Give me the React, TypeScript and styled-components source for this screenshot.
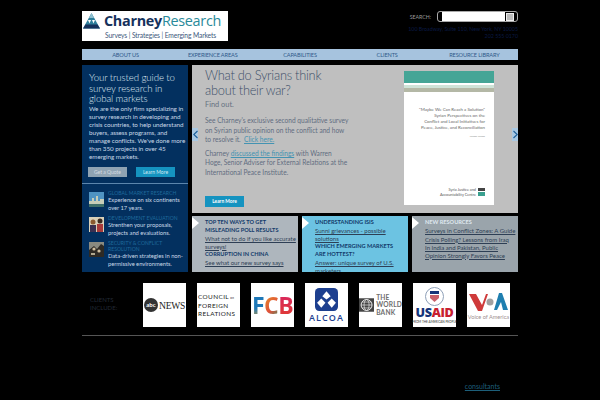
import React from "react";
import styled, { createGlobalStyle } from "styled-components";

const Global = createGlobalStyle`
  html, body { margin: 0; padding: 0; background: #000; height: 100%; overflow: hidden; }
  body { font-family: Lato, "Open Sans", "Liberation Sans", sans-serif; }
`;

const Page = styled.div`
  width: 436px;
  margin: 0 0 0 82px;
  padding-top: 11px;
  display: flex;
  flex-direction: column;
`;

const Header = styled.header`
  display: flex;
  justify-content: space-between;
  height: 38px;
`;

const Logo = styled.div`
  width: 146px;
  height: 30px;
  background: #fff;
  display: flex;
  flex-direction: column;
`;

const LogoTop = styled.div`
  display: flex;
  align-items: center;
  height: 20px;
  padding-left: 1px;
  gap: 4px;
`;

const LogoName = styled.span`
  font-size: 14.4px;
  font-weight: 700;
  letter-spacing: -0.3px;
  color: #16325c;
  line-height: 20px;
  font-family: "Open Sans", sans-serif;
  white-space: nowrap;
  & > b {
    font-weight: 400;
    color: #2a8a9a;
  }
`;

const LogoSub = styled.div`
  font-size: 6.7px;
  letter-spacing: -0.1px;
  line-height: 9px;
  color: #40587c;
  padding-left: 23px;
  white-space: nowrap;
`;

const HeaderRight = styled.div`
  display: flex;
  flex-direction: column;
  align-items: flex-end;
`;

const SearchRow = styled.div`
  display: flex;
  align-items: center;
  gap: 6px;
  height: 11px;
`;

const SearchLabel = styled.span`
  font-size: 5.2px;
  color: #9a9a9a;
`;

const SearchBox = styled.div`
  width: 81px;
  height: 11px;
  box-sizing: border-box;
  border: 1px solid #aaa;
  border-radius: 3px;
  padding: 0 3px 0 4px;
  display: flex;
  align-items: center;
  gap: 1px;
`;

const SearchInput = styled.div`
  width: 63px;
  height: 9px;
  background: #fff;
`;

const SearchBtn = styled.div`
  width: 8px;
  height: 8px;
  background: #bbb;
  border: 1px solid #eee;
  box-sizing: border-box;
`;

const Address = styled.div`
  margin-top: 4px;
  font-size: 5.3px;
  line-height: 7px;
  color: #0a1a45;
  text-align: right;
  white-space: nowrap;
`;

const Nav = styled.nav`
  display: grid;
  grid-template-columns: repeat(5, 1fr);
  height: 11px;
  background: #a6c3de;
`;

const NavItem = styled.a`
  font-size: 5.6px;
  letter-spacing: -0.12px;
  line-height: 11px;
  color: #2f5a8a;
  text-align: center;
`;

const Main = styled.div`
  margin-top: 5px;
  display: grid;
  grid-template-columns: 106px 326px;
  column-gap: 4px;
`;

const Sidebar = styled.aside`
  height: 207px;
  background: #03305f;
  display: flex;
  flex-direction: column;
  box-sizing: border-box;
  padding: 7px 4px 0 7px;
`;

const SideTitle = styled.h2`
  margin: 0;
  font-size: 9.7px;
  letter-spacing: -0.1px;
  line-height: 10.5px;
  font-weight: 300;
  color: #dfe8f1;
  white-space: nowrap;
`;

const SideText = styled.p`
  margin: 1.5px 0 0;
  font-size: 6.3px;
  letter-spacing: -0.05px;
  line-height: 8px;
  color: #c9d8e6;
  white-space: nowrap;
`;

const BtnRow = styled.div`
  display: flex;
  gap: 9px;
  margin: 6px 0 0 -1px;
`;

const SideBtn = styled.a<{ $bg: string; $fg: string }>`
  width: 39px;
  height: 10px;
  font-size: 5px;
  line-height: 10px;
  text-align: center;
  background: ${(p) => p.$bg};
  color: ${(p) => p.$fg};
`;

const SideRule = styled.hr`
  margin: 6px -4px 6px -7px;
  border: 0;
  height: 1px;
  flex: none;
  background: #5c86ad;
`;

const Feature = styled.div`
  display: flex;
  gap: 4px;
  margin-bottom: 3px;
`;

const Thumb = styled.svg`
  width: 15px;
  height: 15px;
  flex: none;
  margin-top: 2px;
`;

const FeatureBody = styled.div`
  display: flex;
  flex-direction: column;
`;

const FeatureTitle = styled.div`
  font-size: 5.1px;
  line-height: 6px;
  color: #1f6a9c;
  white-space: nowrap;
`;

const FeatureText = styled.div`
  font-size: 5.8px;
  letter-spacing: -0.03px;
  line-height: 8px;
  color: #c9d8e6;
  white-space: nowrap;
`;

const RightCol = styled.div`
  display: flex;
  flex-direction: column;
`;

const Hero = styled.section`
  height: 148px;
  background: #bfbfbf;
  position: relative;
  display: flex;
  justify-content: space-between;
  align-items: flex-start;
  box-sizing: border-box;
  padding: 3px 24px 0 13px;
`;

const HeroCopy = styled.div`
  width: 160px;
  display: flex;
  flex-direction: column;
  align-items: flex-start;
`;

const HeroTitle = styled.h1`
  margin: 0;
  font-size: 12.8px;
  letter-spacing: -0.25px;
  line-height: 15px;
  font-weight: 300;
  color: #3e506a;
  white-space: nowrap;
`;

const HeroSub = styled.div`
  margin-top: 2px;
  font-size: 7.4px;
  line-height: 10px;
  color: #66727f;
`;

const HeroPara = styled.p`
  margin: 6px 0 0;
  font-size: 6.6px;
  line-height: 9.6px;
  color: #5f6d7f;
  white-space: nowrap;
  & + & {
    margin-top: 4px;
  }
`;

const HeroLink = styled.a`
  color: #4393b2;
  text-decoration: underline;
`;

const LearnBtn = styled.a`
  margin-top: 18px;
  width: 39px;
  height: 11px;
  background: #1593c0;
  color: #fff;
  font-size: 4.8px;
  font-weight: 700;
  line-height: 11px;
  text-align: center;
`;

const Arrow = styled.div<{ $side: "left" | "right" }>`
  position: absolute;
  top: 63px;
  ${(p) => (p.$side === "left" ? "left: 0;" : "right: 0;")}
  width: 6px;
  height: 13px;
  display: flex;
  align-items: center;
  justify-content: center;
  background: #a9c8e2;
`;

const Cover = styled.div`
  width: 90px;
  height: 134px;
  margin-top: 3px;
  background: #fff;
  display: flex;
  flex-direction: column;
  align-items: flex-end;
`;

const CoverBand = styled.div<{ $h: number; $c: string }>`
  align-self: stretch;
  flex: none;
  height: ${(p) => p.$h}px;
  background: ${(p) => p.$c};
`;

const CoverTitle = styled.div`
  margin: 15px 9px 0 0;
  font-size: 4.4px;
  line-height: 6px;
  color: #666;
  text-align: right;
  white-space: nowrap;
`;

const CoverAuthor = styled.div`
  margin: 3px 9px 0 0;
  font-size: 2.6px;
  color: #888;
`;

const CoverFoot = styled.div`
  margin: auto 9px 8px 0;
  display: flex;
  gap: 2px;
  align-items: center;
  font-size: 3.8px;
  line-height: 5px;
  color: #555;
  text-align: right;
`;

const CoverMark = styled.div`
  width: 7px;
  height: 8px;
  background: linear-gradient(#444 0 40%, #fff 40% 55%, #3aa08f 55%);
`;

const Cards = styled.div`
  margin-top: 3px;
  display: grid;
  grid-template-columns: repeat(3, 106px);
  column-gap: 4px;
  height: 56px;
`;

const Card = styled.div<{ $bg: string }>`
  background: ${(p) => p.$bg};
  position: relative;
  overflow: hidden;
  box-sizing: border-box;
  padding: 2px 2px 0 13px;
  &::before {
    content: "";
    position: absolute;
    left: 0;
    top: 1px;
    border-left: 7px solid #fff;
    border-top: 6px solid transparent;
    border-bottom: 6px solid transparent;
  }
`;

const CardTitle = styled.div<{ $light?: boolean }>`
  font-size: 5.6px;
  line-height: 8px;
  font-weight: 700;
  color: ${(p) => (p.$light ? "#dfe8ef" : "#123a6a")};
  white-space: nowrap;
`;

const CardLink = styled.a`
  display: block;
  font-size: 6px;
  line-height: 7.5px;
  margin-top: 1px;
  color: #2e3f55;
  text-decoration: underline;
  white-space: nowrap;
`;

const Clients = styled.section`
  margin-top: 11px;
  display: flex;
  align-items: flex-start;
`;

const ClientsLabel = styled.div`
  width: 61px;
  flex: none;
  padding: 13px 0 0 8px;
  box-sizing: border-box;
  font-size: 6px;
  line-height: 8px;
  color: #222a36;
`;

const ClientList = styled.div`
  display: flex;
  gap: 11px;
`;

const ClientLogo = styled.div`
  width: 43px;
  height: 44px;
  background: #fff;
  display: flex;
  align-items: center;
  justify-content: center;
  flex-direction: column;
  flex: none;
`;

const AbcRow = styled.div`
  display: flex;
  align-items: center;
  gap: 1px;
`;

const AbcBall = styled.div`
  width: 14px;
  height: 14px;
  border-radius: 50%;
  background: #333;
  color: #fff;
  font-size: 6px;
  font-weight: 700;
  line-height: 14px;
  text-align: center;
`;

const AbcNews = styled.span`
  font-family: "Liberation Serif", serif;
  font-size: 9.6px;
  letter-spacing: -0.3px;
  color: #222;
`;

const CfrText = styled.div`
  font-size: 6.4px;
  line-height: 7.6px;
  letter-spacing: 0.4px;
  color: #222;
  white-space: nowrap;
  width: 41px;
  & > small {
    font-size: 3px;
  }
`;

const FcbText = styled.div`
  font-size: 23px;
  font-weight: 700;
  letter-spacing: -0.5px;
  line-height: 24px;
  white-space: nowrap;
  font-family: "Open Sans", sans-serif;
`;

const FcbLetter = styled.span<{ $c: string }>`
  background: ${(p) => p.$c};
  -webkit-background-clip: text;
  background-clip: text;
  color: transparent;
`;

const AlcoaMark = styled.svg`
  width: 23px;
  height: 23px;
  margin: 0 0 2px;
`;

const AlcoaText = styled.div`
  font-size: 9px;
  font-weight: 600;
  letter-spacing: 1.1px;
  line-height: 9px;
  font-family: "Open Sans", sans-serif;
  color: #1d3f8f;
`;

const BankRow = styled.div`
  display: flex;
  align-items: center;
  gap: 2px;
  width: 100%;
`;

const BankText = styled.div`
  font-size: 6.6px;
  line-height: 7.4px;
  font-weight: 700;
  letter-spacing: 0.2px;
  color: #6e6e6e;
`;

const UsaidSeal = styled.svg`
  width: 19px;
  height: 19px;
`;

const UsaidText = styled.div`
  font-size: 12.6px;
  font-weight: 800;
  line-height: 13px;
  letter-spacing: -0.3px;
  font-family: "Open Sans", sans-serif;
  color: #16357a;
  & > span {
    color: #c8202f;
  }
`;

const UsaidSub = styled.div`
  font-size: 3.1px;
  line-height: 4px;
  margin-top: 1px;
  color: #333;
  white-space: nowrap;
`;

const VoaMark = styled.svg`
  width: 40px;
  height: 18px;
  margin-top: 2px;
`;

const VoaText = styled.div`
  margin-top: 2px;
  font-size: 5.6px;
  line-height: 7px;
  color: #a09090;
  white-space: nowrap;
`;

const Rule = styled.hr`
  margin: 8px 0 0;
  border: 0;
  height: 1px;
  background: #555;
`;

const Foot = styled.div`
  margin-top: 42px;
  padding-right: 18px;
  text-align: right;
  line-height: 9px;
`;

const FootLink = styled.a`
  font-size: 7px;
  color: #1d5f7a;
  text-decoration: underline;
`;

const nav = ["ABOUT US", "EXPERIENCE AREAS", "CAPABILITIES", "CLIENTS", "RESOURCE LIBRARY"];

export default function App() {
  return (
    <Page>
      <Global />
      <Header>
        <Logo>
          <LogoTop>
            <svg width="17" height="16" viewBox="0 0 17 16">
              <polygon points="8.5,0 17,15.5 0,15.5" fill="#2f7f9b" />
              <polygon points="8.5,0 11,5 6,5" fill="#8fc0d0" />
              <polygon points="5,7 8,7 6.5,10.5" fill="#fff" />
              <polygon points="9,7 12,7 10.5,10.5" fill="#fff" />
              <polygon points="2.5,11.5 14.5,11.5 17,15.5 0,15.5" fill="#16325c" />
            </svg>
            <LogoName>Charney<b>Research</b></LogoName>
          </LogoTop>
          <LogoSub>Surveys | Strategies | Emerging Markets</LogoSub>
        </Logo>
        <HeaderRight>
          <SearchRow>
            <SearchLabel>SEARCH:</SearchLabel>
            <SearchBox>
              <SearchInput />
              <SearchBtn />
            </SearchBox>
          </SearchRow>
          <Address>
            100 Broadway, Suite 110, New York, NY 10005
            <br />
            202 555 0170
          </Address>
        </HeaderRight>
      </Header>
      <Nav>
        {nav.map((n) => (
          <NavItem key={n}>{n}</NavItem>
        ))}
      </Nav>
      <Main>
        <Sidebar>
          <SideTitle>
            Your trusted guide to
            <br />
            survey research in
            <br />
            global markets
          </SideTitle>
          <SideText>
            We are the only firm specializing in
            <br />
            survey research in developing and
            <br />
            crisis countries, to help understand
            <br />
            buyers, assess programs, and
            <br />
            manage conflicts. We've done more
            <br />
            than 350 projects in over 45
            <br />
            emerging markets.
          </SideText>
          <BtnRow>
            <SideBtn $bg="#8fa3b3" $fg="#d5dde3">Get a Quote</SideBtn>
            <SideBtn $bg="#1593c0" $fg="#cfe8f2">Learn More</SideBtn>
          </BtnRow>
          <SideRule />
          <Feature>
            <Thumb viewBox="0 0 15 15">
              <rect width="15" height="15" fill="#4f93c2" />
              <path d="M0 9h3V6h2v3h2V4h2v5h2V7h4v8H0z" fill="#c7cdb8" />
              <rect y="12" width="15" height="3" fill="#3f6f6a" />
            </Thumb>
            <FeatureBody>
              <FeatureTitle>GLOBAL MARKET RESEARCH</FeatureTitle>
              <FeatureText>
                Experience on six continents
                <br />
                over 17 years.
              </FeatureText>
            </FeatureBody>
          </Feature>
          <Feature>
            <Thumb viewBox="0 0 15 15">
              <rect width="15" height="15" fill="#d8d0b8" />
              <circle cx="4" cy="5" r="2.5" fill="#8a5a30" />
              <rect x="1" y="8" width="6" height="7" fill="#3a3050" />
              <circle cx="11" cy="4" r="2.5" fill="#3a2a20" />
              <rect x="8" y="7" width="6" height="8" fill="#a83a3a" />
            </Thumb>
            <FeatureBody>
              <FeatureTitle>DEVELOPMENT EVALUATION</FeatureTitle>
              <FeatureText>
                Strenthen your proposals,
                <br />
                projects and evaluations.
              </FeatureText>
            </FeatureBody>
          </Feature>
          <Feature>
            <Thumb viewBox="0 0 15 15">
              <rect width="15" height="15" fill="#8a8a80" />
              <path d="M0 8l5-4 3 3 4-5 3 2v11H0z" fill="#2e2a24" />
              <circle cx="5" cy="7" r="1.6" fill="#d0bfa0" />
              <circle cx="10" cy="9" r="1.6" fill="#d0bfa0" />
              <rect x="2" y="11" width="4" height="2" fill="#b0a890" />
            </Thumb>
            <FeatureBody>
              <FeatureTitle>
                SECURITY &amp; CONFLICT
                <br />
                RESOLUTION
              </FeatureTitle>
              <FeatureText>
                Data-driven strategies in non-
                <br />
                permissive environments.
              </FeatureText>
            </FeatureBody>
          </Feature>
        </Sidebar>
        <RightCol>
          <Hero>
            <Arrow $side="left">
              <svg width="5" height="9" viewBox="0 0 5 9">
                <path d="M4.5 1 .8 4.5 4.5 8" fill="none" stroke="#1d5f9a" strokeWidth="1.1" />
              </svg>
            </Arrow>
            <HeroCopy>
              <HeroTitle>
                What do Syrians think
                <br />
                about their war?
              </HeroTitle>
              <HeroSub>Find out.</HeroSub>
              <HeroPara>
                See Charney's exclusive second qualitative survey
                <br />
                on Syrian public opinion on the conflict and how
                <br />
                to resolve it.&nbsp; <HeroLink>Click here.</HeroLink>
              </HeroPara>
              <HeroPara>
                Charney <HeroLink>discussed the findings</HeroLink> with Warren
                <br />
                Hoge, Senior Adviser for External Relations at the
                <br />
                International Peace Institute.
              </HeroPara>
              <LearnBtn>Learn More</LearnBtn>
            </HeroCopy>
            <Cover>
              <CoverBand $h={12} $c="#45a596" />
              <CoverBand $h={2} $c="#fff" />
              <CoverBand $h={3} $c="#cfe3d8" />
              <CoverBand $h={4} $c="#b4b8a6" />
              <CoverTitle>
                "Maybe We Can Reach a Solution"
                <br />
                Syrian Perspectives on the
                <br />
                Conflict and Local Initiatives for
                <br />
                Peace, Justice, and Reconciliation
              </CoverTitle>
              <CoverAuthor>Karam Karam</CoverAuthor>
              <CoverFoot>
                <span>
                  Syria Justice and
                  <br />
                  Accountability Centre
                </span>
                <CoverMark />
              </CoverFoot>
            </Cover>
            <Arrow $side="right">
              <svg width="5" height="9" viewBox="0 0 5 9">
                <path d="M.5 1 4.2 4.5 .5 8" fill="none" stroke="#1d5f9a" strokeWidth="1.1" />
              </svg>
            </Arrow>
          </Hero>
          <Cards>
            <Card $bg="#aeb6bd">
              <CardTitle>TOP TEN WAYS TO GET<br />MISLEADING POLL RESULTS</CardTitle>
              <CardLink>What not to do if you like accurate<br />surveys!</CardLink>
              <CardTitle>CORRUPTION IN CHINA</CardTitle>
              <CardLink>See what our new survey says</CardLink>
            </Card>
            <Card $bg="#6cc3e2">
              <CardTitle>UNDERSTANDING ISIS</CardTitle>
              <CardLink>Sunni grievances - possible<br />solutions</CardLink>
              <CardTitle>WHICH EMERGING MARKETS<br />ARE HOTTEST?</CardTitle>
              <CardLink>Answer: unique survey of U.S.<br />marketers</CardLink>
            </Card>
            <Card $bg="#9aa4ab">
              <CardTitle $light>NEW RESOURCES</CardTitle>
              <CardLink>Surveys in Conflict Zones: A Guide</CardLink>
              <CardLink>Crisis Polling? Lessons from Iraq</CardLink>
              <CardLink>In India and Pakistan, Public<br />Opinion Strongly Favors Peace</CardLink>
            </Card>
          </Cards>
        </RightCol>
      </Main>
      <Clients>
        <ClientsLabel>CLIENTS<br />INCLUDE:</ClientsLabel>
        <ClientList>
          <ClientLogo>
            <AbcRow>
              <AbcBall>abc</AbcBall>
              <AbcNews>NEWS</AbcNews>
            </AbcRow>
          </ClientLogo>
          <ClientLogo>
            <CfrText>COUNCIL<small> on</small><br />FOREIGN<br />RELATIONS</CfrText>
          </ClientLogo>
          <ClientLogo>
            <FcbText>
              <FcbLetter $c="linear-gradient(#1e78b8,#1e78b8 60%,#e8a020)">F</FcbLetter>
              <FcbLetter $c="linear-gradient(135deg,#e8a020,#e0503a 60%,#2a9a6a)">C</FcbLetter>
              <FcbLetter $c="linear-gradient(#d8206a,#e0402a)">B</FcbLetter>
            </FcbText>
          </ClientLogo>
          <ClientLogo>
            <AlcoaMark viewBox="0 0 22 22">
              <rect width="22" height="22" rx="4" fill="#1d3f8f" />
              <polygon points="11,3 15,8 11,11 7,8" fill="#fff" />
              <polygon points="6,10 10,14 6,19 2,14" fill="#fff" />
              <polygon points="16,10 20,14 16,19 12,14" fill="#fff" />
            </AlcoaMark>
            <AlcoaText>ALCOA</AlcoaText>
          </ClientLogo>
          <ClientLogo>
            <BankRow>
              <svg width="18" height="16" viewBox="0 0 18 16">
                <rect width="18" height="16" fill="#444" />
                <circle cx="9" cy="8" r="6.5" fill="none" stroke="#fff" />
                <ellipse cx="9" cy="8" rx="3" ry="6.5" fill="none" stroke="#fff" strokeWidth=".7" />
                <path d="M2.5 8h13M3.5 4.5h11M3.5 11.5h11" stroke="#fff" strokeWidth=".7" />
              </svg>
              <BankText>THE<br />WORLD<br />BANK</BankText>
            </BankRow>
          </ClientLogo>
          <ClientLogo>
            <UsaidSeal viewBox="0 0 19 19">
              <circle cx="9.5" cy="9.5" r="9" fill="#fff" stroke="#8fa0b8" strokeWidth="1" />
              <rect x="5" y="4" width="9" height="3" fill="#16357a" />
              <path d="M5 8h9v3l-4.5 4L5 11z" fill="#c8606a" />
            </UsaidSeal>
            <UsaidText>US<span>AID</span></UsaidText>
            <UsaidSub>FROM THE AMERICAN PEOPLE</UsaidSub>
          </ClientLogo>
          <ClientLogo>
            <VoaMark viewBox="0 0 40 18">
              <path d="M0 1h7l6 11 4-11h2L13 18H9z" fill="#cf3a3a" />
              <circle cx="21" cy="9" r="3.5" fill="#a0a0a0" />
              <path d="M30 0h3l6 17h-5l-2-8-4 8h-3z" fill="#1f7fb0" />
            </VoaMark>
            <VoaText>Voice of America</VoaText>
          </ClientLogo>
        </ClientList>
      </Clients>
      <Rule />
      <Foot>
        <FootLink>consultants</FootLink>
      </Foot>
    </Page>
  );
}
